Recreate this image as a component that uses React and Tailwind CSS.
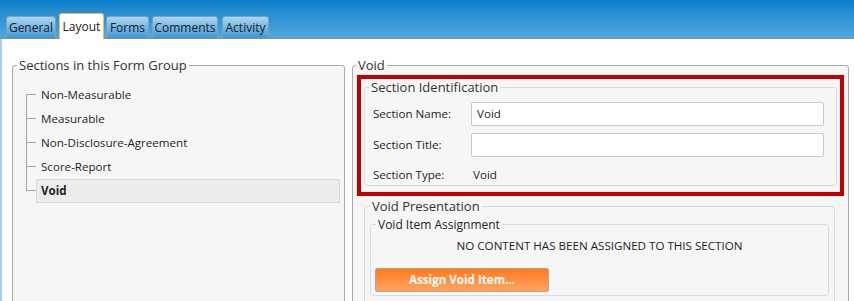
import React from "react"

const tabs = [
  { label: "General", cls: "ml-[6px] w-[50px]" },
  { label: "Layout", cls: "ml-[3px] w-[45px]", active: true },
  { label: "Forms", cls: "ml-[2px] w-[43px]" },
  { label: "Comments", cls: "ml-[3px] w-[66px]" },
  { label: "Activity", cls: "ml-[4px] w-[47px]" },
]

const sections = ["Non-Measurable", "Measurable", "Non-Disclosure-Agreement", "Score-Report", "Void"]

const Tab = ({ label, cls, active }) =>
  active ? (
    <div
      className={`${cls} h-[26px] -mb-px flex items-center justify-center rounded-t-[3px] border border-b-0 border-[#f0c23c] bg-white text-[12px] text-[#1a1a1a]`}
    >
      {label}
    </div>
  ) : (
    <div
      className={`${cls} h-[22px] flex items-center justify-center rounded-t-[3px] border border-b-0 border-[#7d9fbb] bg-gradient-to-b from-[#aad6f3] to-[#3c97d5] text-[12px] text-[#1a1a1a]`}
    >
      {label}
    </div>
  )

const TreeRow = ({ label, first, last }) => (
  <div className="flex h-[24px]">
    <div className="flex w-[10px] flex-col">
      <div className={`h-[12px] border-b border-[#a6a6a6] ${first ? "" : "border-l"}`} />
      <div className={`flex-1 ${last ? "" : "border-l border-[#a6a6a6]"}`} />
    </div>
    {last ? (
      <div className="flex w-[304px] items-center border border-[#dadada] bg-[#ececec] pl-[4px] font-bold">{label}</div>
    ) : (
      <div className="flex items-center pl-[5px]">{label}</div>
    )}
  </div>
)

export default function App() {
  return (
    <div className="h-[301px] w-[854px] overflow-hidden bg-white font-['Open_Sans','Noto_Sans',sans-serif] text-[11.6px] text-[#1e1e1e]">
      {/* tab strip */}
      <div className="flex h-[39px] items-end border-b border-[#8c8c8c] bg-gradient-to-b from-[#0580cb] to-[#4ea8dd]">
        {tabs.map((t) => (
          <Tab key={t.label} {...t} />
        ))}
      </div>

      <div className="flex h-[262px]">
        <div className="w-[2px] bg-[#a4d0ee]" />

        {/* left: sections */}
        <fieldset className="ml-[10px] mt-[18px] h-[300px] w-[333px] shrink-0 rounded-[3px] border border-[#a9a9a9] bg-[#f6f6f6]">
          <legend className="ml-[4px] px-[2px] text-[13px] leading-[17px] text-[#333]">Sections in this Form Group</legend>
          <div className="mt-[9px] pl-[13px]">
            {sections.map((s, i) => (
              <TreeRow key={s} label={s} first={i === 0} last={i === sections.length - 1} />
            ))}
          </div>
        </fieldset>

        {/* right: section details */}
        <fieldset className="ml-[7px] mt-[18px] h-[300px] w-[497px] shrink-0 rounded-[3px] border border-[#a9a9a9] bg-[#f6f6f6]">
          <legend className="ml-[3px] px-[2px] text-[13px] leading-[17px] text-[#333]">Void</legend>

          <div className="mx-[4px] mt-[1px] border-4 border-[#c00000] px-[3px] pb-[6px]">
            <fieldset className="rounded-[3px] border border-[#d3dde3] pb-[1px] pl-[8px] pr-[12px]">
              <legend className="ml-[-4px] px-[2px] text-[13px] leading-[17px] text-[#333]">Section Identification</legend>
              <div className="mt-[6px] flex h-[24px] items-center">
                <span className="w-[98px]">Section Name:</span>
                <div className="flex h-[24px] flex-1 items-center rounded-[2px] border border-[#c8c8c8] bg-white px-[5px]">Void</div>
              </div>
              <div className="mt-[7px] flex h-[24px] items-center">
                <span className="w-[98px]">Section Title:</span>
                <div className="h-[24px] flex-1 rounded-[2px] border border-[#c8c8c8] bg-white" />
              </div>
              <div className="mt-[9px] flex h-[18px] items-center">
                <span className="w-[100px]">Section Type:</span>
                <span>Void</span>
              </div>
            </fieldset>
          </div>

          <fieldset className="ml-[11px] mr-[13px] mt-[2px] h-[200px] rounded-[3px] border border-[#d3dde3]">
            <legend className="ml-[5px] px-[2px] text-[13px] leading-[17px] text-[#333]">Void Presentation</legend>
            <fieldset className="mx-[5px] mt-[2px] rounded-[3px] border border-[#d3dde3] pb-[3px]">
              <legend className="ml-[5px] px-[2px] text-[12px] leading-[15px]">Void Item Assignment</legend>
              <div className="mt-[6px] text-center leading-[16px]">NO CONTENT HAS BEEN ASSIGNED TO THIS SECTION</div>
              <button className="ml-[4px] mt-[14px] flex h-[24px] w-[174px] items-center justify-center rounded-[2px] border border-[#c0a090] bg-gradient-to-b from-[#ff7a14] to-[#ffa45e] font-bold text-white">
                Assign Void Item...
              </button>
            </fieldset>
          </fieldset>
        </fieldset>
      </div>
    </div>
  )
}
